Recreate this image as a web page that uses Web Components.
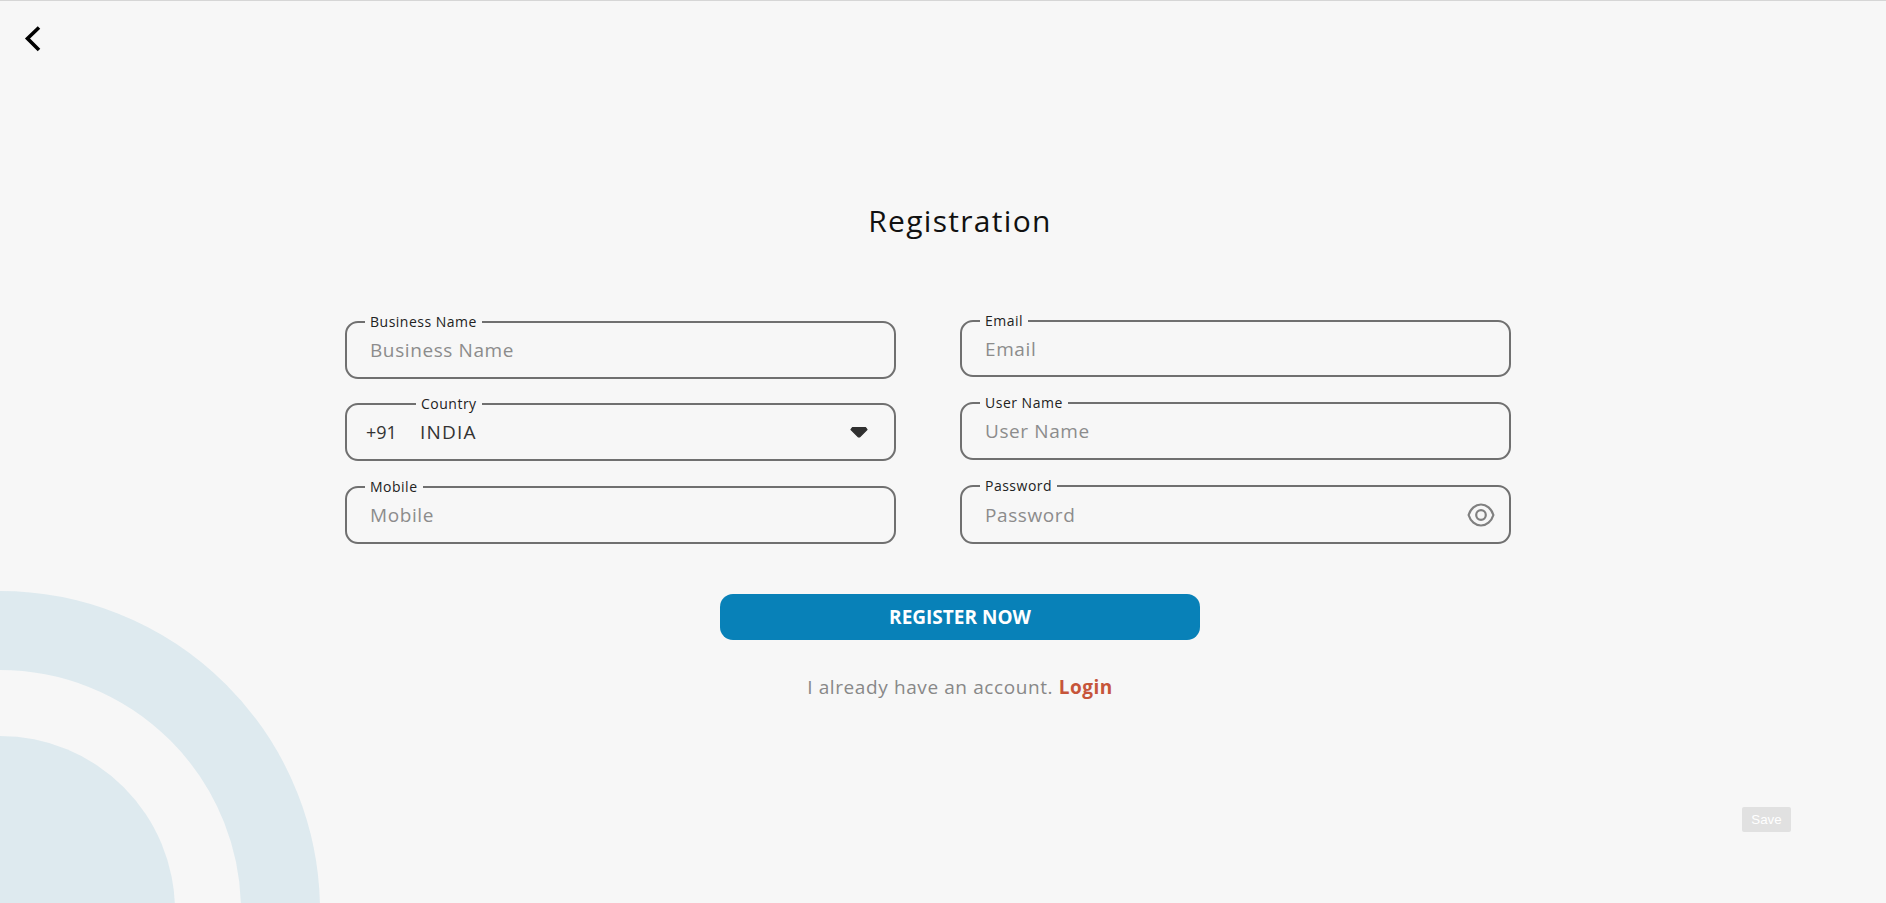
<!DOCTYPE html>
<html lang="en">
<head>
<meta charset="utf-8">
<title>Registration</title>
<style>
  html, body { margin: 0; height: 100%; background: #f7f7f7; }
  body { font-family: "Open Sans", "Noto Sans", sans-serif; overflow: hidden; }
</style>
</head>
<body>
<reg-page>
  <reg-field slot="left" label="Business Name">Business Name</reg-field>
  <reg-field slot="left" label="Country" filled notch="76" style="--end-pad:26px;margin-bottom:1px">
    <span slot="start">+91</span>
    INDIA
    <svg slot="end" width="18" height="13" viewBox="0 0 18 13" style="display:block">
      <path d="M2.500 1.500h13l1.500 2L9.500 11h-1L1 3.500z" fill="#303030" stroke="#303030" stroke-width="1.200" stroke-linejoin="round"/>
    </svg>
  </reg-field>
  <reg-field slot="left" label="Mobile">Mobile</reg-field>

  <reg-field slot="right" label="Email" style="--field-h:57px">Email</reg-field>
  <reg-field slot="right" label="User Name">User Name</reg-field>
  <reg-field slot="right" label="Password" style="--field-h:59px">
    Password
    <svg slot="end" width="28" height="24" viewBox="0 0 28 24" style="display:block">
      <path d="M1.600 12C3.500 5.500 8.500 1.500 14 1.500S24.500 5.500 26.400 12C24.500 18.500 19.500 22.500 14 22.500S3.500 18.500 1.600 12z" fill="none" stroke="#808080" stroke-width="2.200"/>
      <circle cx="14" cy="12" r="4.800" fill="none" stroke="#808080" stroke-width="2.200"/>
    </svg>
  </reg-field>
</reg-page>

<script>
(function (customElements) {
  const PAGE_BG = '#f7f7f7';

  // one outlined input, the label sits on the top border
  class RegField extends HTMLElement {
    connectedCallback() {
      const label = this.getAttribute('label') || '';
      const notch = this.getAttribute('notch');
      const filled = this.hasAttribute('filled');
      this.attachShadow({ mode: 'open' });
      this.shadowRoot.innerHTML = `
        <style>
          :host {
            display: block;
            height: var(--field-h, 58px);
            font-size: 19px;
            letter-spacing: ${filled ? '1.2px' : '0.6px'};
            color: ${filled ? '#333' : '#8c8c8c'};
          }
          .box {
            position: relative;
            box-sizing: border-box;
            height: 100%;
            display: flex;
            align-items: center;
            padding: 0 var(--end-pad, 14px) 0 23px;
            border: 2px solid #707070;
            border-radius: 13px;
          }
          .label {
            position: absolute;
            top: -10px;
            left: ${notch ? notch - 7 : 18}px;
            padding: 0 5px;
            background: ${PAGE_BG};
            font-size: 14px;
            line-height: 18px;
            letter-spacing: 0.5px;
            color: #222;
          }
          .start { font-size: 18px; color: #333; letter-spacing: 0; }
          .value { flex: 1; }
          ::slotted([slot="start"]) { display: block; margin-left: -4px; width: 54px; }
        </style>
        <div class="box">
          <span class="label">${label}</span>
          <div class="start"><slot name="start"></slot></div>
          <div class="value"><slot></slot></div>
          <slot name="end"></slot>
        </div>`;
    }
  }

  class RegButton extends HTMLElement {
    connectedCallback() {
      this.attachShadow({ mode: 'open' });
      this.shadowRoot.innerHTML = `
        <style>
          :host {
            display: flex;
            align-items: center;
            justify-content: center;
            width: 480px;
            height: 46px;
            border-radius: 13px;
            background: #0881b8;
            color: #fff;
            font-size: 19px;
            font-weight: 700;
            letter-spacing: 0;
            cursor: pointer;
          }
        </style>
        <slot></slot>`;
    }
  }

  class RegPage extends HTMLElement {
    connectedCallback() {
      this.attachShadow({ mode: 'open' });
      this.shadowRoot.innerHTML = `
        <style>
          :host {
            display: flex;
            flex-direction: column;
            position: relative;
            box-sizing: border-box;
            height: 903px;
            border-top: 1px solid #d6d6d6;
            overflow: hidden;
          }
          .arcs { position: absolute; left: 0; bottom: 0; display: block; }
          .back { display: block; margin: 24px 0 0 23px; }
          h1 {
            margin: 148px 0 0 34px;
            text-align: center;
            font-size: 30px;
            line-height: 40px;
            font-weight: 400;
            letter-spacing: 1.300px;
            color: #111;
          }
          .form {
            display: grid;
            grid-template-columns: 551px 551px;
            column-gap: 64px;
            margin: 79px 0 0 345px;
            align-items: start;
          }
          .col { display: flex; flex-direction: column; gap: 25px; }
          .col.left { margin-top: 1px; gap: 24px; }
          .actions {
            display: flex;
            flex-direction: column;
            align-items: center;
            margin: 50px 0 0 34px;
          }
          .login {
            margin-top: 33px;
            font-size: 19px;
            line-height: 28px;
            letter-spacing: 0.6px;
            color: #888;
          }
          .login b { color: #c6553a; letter-spacing: 0.5px; }
          .save {
            position: absolute;
            left: 1742px;
            top: 806px;
            width: 49px;
            height: 25px;
            display: flex;
            align-items: center;
            justify-content: center;
            border-radius: 2px;
            background: #e1e1e1;
            color: #fff;
            font: 13.33px "Liberation Sans", Arial, sans-serif;
          }
        </style>
        <svg class="arcs" width="340" height="333" viewBox="0 570 340 333">
          <circle cx="0" cy="911" r="280.500" fill="none" stroke="#deeaef" stroke-width="79"/>
          <circle cx="0" cy="911" r="175" fill="#deeaef"/>
        </svg>
        <svg class="back" width="20" height="28" viewBox="0 0 20 28">
          <path d="M16 2.500 4.500 13.500 16 25" fill="none" stroke="#000" stroke-width="3.600"/>
        </svg>
        <h1>Registration</h1>
        <div class="form">
          <div class="col left"><slot name="left"></slot></div>
          <div class="col"><slot name="right"></slot></div>
        </div>
        <div class="actions">
          <reg-button>REGISTER NOW</reg-button>
          <div class="login">I already have an account. <b>Login</b></div>
        </div>
        <div class="save">Save</div>`;
    }
  }

  customElements.define('reg-field', RegField);
  customElements.define('reg-button', RegButton);
  customElements.define('reg-page', RegPage);
})(window.customElements);
</script>
</body>
</html>
